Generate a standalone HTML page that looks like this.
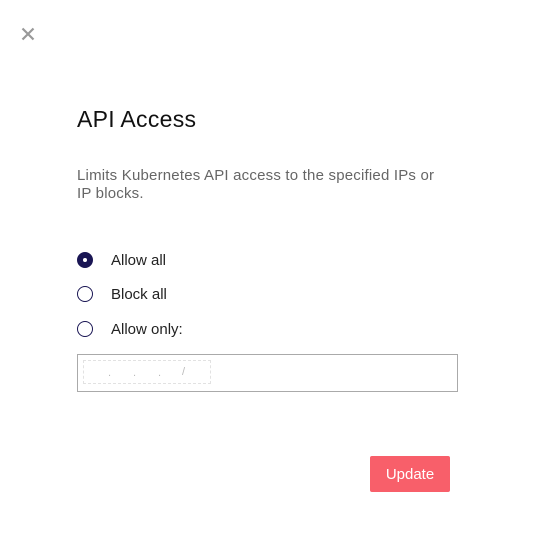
<!DOCTYPE html>
<html><head><style>
body{margin:0;width:535px;height:541px;background:#fff;font-family:"Liberation Sans",sans-serif;position:relative;overflow:hidden}
.a{position:absolute}
.r{position:absolute;left:77px;width:16px;height:16px;border:1.5px solid #1a1654;border-radius:50%;box-sizing:border-box}
.l{position:absolute;left:111px;font-size:15px;color:#222}
</style></head><body>
<svg class="a" style="left:21px;top:27px" width="14" height="14"><path d="M1.5 1.5L12.5 12.5M12.5 1.5L1.5 12.5" stroke="#999" stroke-width="2.2"/></svg>
<div class="a" style="left:77px;top:106px;font-size:23px;color:#111;letter-spacing:0.3px">API Access</div>
<div class="a" style="left:77px;top:167px;width:375px;font-size:15px;line-height:18px;color:#666;letter-spacing:0.2px">Limits Kubernetes API access to the specified IPs or IP blocks.</div>
<div class="r" style="top:252px;background:#1a1654;border-color:#1a1654"></div>
<div class="a" style="left:83px;top:258px;width:4px;height:4px;border-radius:50%;background:#fff"></div>
<div class="l" style="top:252px">Allow all</div>
<div class="r" style="top:286px"></div>
<div class="l" style="top:286px">Block all</div>
<div class="r" style="top:321px"></div>
<div class="l" style="top:321px">Allow only:</div>
<div class="a" style="left:77px;top:354px;width:379px;height:36px;border:1px solid #aaa"></div>
<div class="a" style="left:83px;top:360px;width:128px;height:24px;border:1px dashed #e2e2e2;box-sizing:border-box;font-size:11px;color:#bbb"><span style="position:absolute;left:24px;top:6px">.</span><span style="position:absolute;left:49px;top:6px">.</span><span style="position:absolute;left:74px;top:6px">.</span><span style="position:absolute;left:98px;top:5px">/</span></div>
<div class="a" style="left:370px;top:456px;width:80px;height:36px;background:#f85f6a;border-radius:2px;color:#fff;font-size:15px;line-height:38px;text-align:center">Update</div>
</body></html>
